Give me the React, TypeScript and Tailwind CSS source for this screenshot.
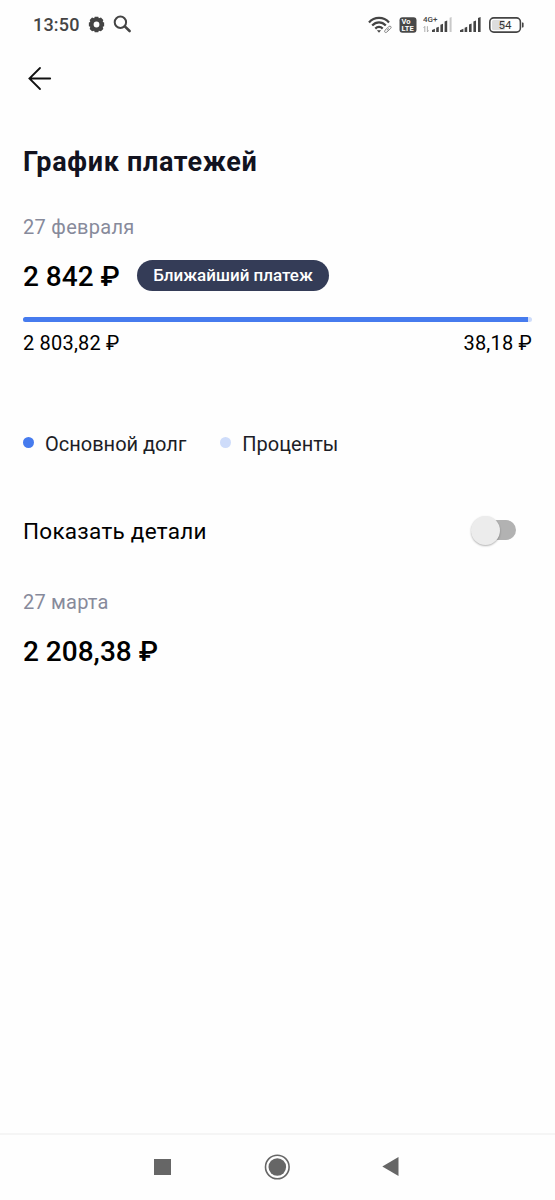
import React from 'react';

const PAYMENT = { principal: '2 803,82 ₽', interest: '38,18 ₽', principalShare: 99.3 };

const LEGEND = [
  { label: 'Основной долг', color: 'bg-[#467bee]' },
  { label: 'Проценты', color: 'bg-[#cedcfa]' },
];

function WifiIcon() {
  return (
    <svg width="25" height="20" viewBox="0 0 25 20" fill="none" stroke="#444" strokeWidth="2.2">
      <path d="M1 7.4C6.3 1.4 15.7 1.4 21 7.4" />
      <path d="M4.2 10.6C8.2 6.4 13.8 6.4 17.8 10.6" />
      <path d="M7.3 13.6C9.5 11.4 12.5 11.4 14.7 13.6" />
      <path d="M8.9 15.3h4.2L11 17.7z" fill="#444" stroke="none" />
      <path d="M17 15.2l3.8-3.6c1.5-1.3 3.2.4 1.9 1.8l-3.9 3.7c-1.5 1.3-3-.5-1.8-1.9z" stroke="#fefefe" strokeWidth="3" />
      <path d="M17 15.2l3.8-3.6c1.5-1.3 3.2.4 1.9 1.8l-3.9 3.7c-1.5 1.3-3-.5-1.8-1.9zM18.9 15.3l2.2-2" stroke="#777" strokeWidth="0.9" />
    </svg>
  );
}

function VolteIcon() {
  return (
    <svg width="18" height="16" viewBox="0 0 18 16">
      <rect x="0.5" y="0.2" width="17" height="15.6" rx="3" fill="#484848" />
      <text x="2.6" y="7.4" fill="#fff" className="font-bold text-[7.5px]">Vo</text>
      <text x="2.6" y="14.4" fill="#fff" className="font-bold text-[7.5px]">LTE</text>
    </svg>
  );
}

function MobileDataIcon() {
  return (
    <svg width="30" height="20" viewBox="0 0 30 20" fill="#444">
      <text x="0" y="7.2" className="text-[8px] font-medium">4G+</text>
      <path d="M1.8 17V11.4M.6 12.8l1.2-1.4M4.4 11.2v5.6M5.6 15.4l-1.2 1.5" fill="none" stroke="#999" strokeWidth="0.8" />
      <path d="M9 15l2.9-1.2V17H9zM13.2 12.8l2.6-1V17h-2.6zM17.4 9.8l2.6-1V17h-2.6zM21.6 6.6l2.6-1V17h-2.6z" />
      <path d="M26.6 2.8l2-.8V17h-2z" fill="#c8c8c8" />
    </svg>
  );
}

function SignalIcon() {
  return (
    <svg width="21" height="20" viewBox="0 0 21 20" fill="#444">
      <path d="M0 15.2l3.4-1.4V17H0zM4.6 12.8l2.6-1V17H4.6zM9 9.6l2.6-1V17H9zM13.4 6.4l2.6-1V17h-2.6zM18 3l2.6-1V17H18z" />
    </svg>
  );
}

function BatteryIcon() {
  return (
    <svg width="36" height="16" viewBox="0 0 36 16">
      <rect x="3" y="3" width="13" height="10" rx="1.5" fill="#ddd" />
      <rect x="0.8" y="0.9" width="30.6" height="14.2" rx="4" fill="none" stroke="#444" strokeWidth="1.6" />
      <path d="M33 5.5h.6q1 0 1 1v3q0 1-1 1H33z" fill="#444" />
      <text x="16" y="12" textAnchor="middle" fill="#333" className="text-[11.5px]">54</text>
    </svg>
  );
}

function StatusBar() {
  return (
    <header className="flex h-12 items-center justify-between pr-[30px] pl-[33px] text-[#444]">
      <div className="flex items-center">
        <span className="w-[55px] pt-px text-[18px] font-medium tracking-[0.2px]">13:50</span>
        <svg width="17" height="17" viewBox="0 0 24 24" fill="#444" fillRule="evenodd">
          <path d="M9.5 1h5l.8 2 3-.8 3.3 3.3-.8 3 2 .8v5.2l-2 .8.8 3-3.3 3.3-3-.8-.8 2h-5l-.8-2-3 .8-3.3-3.3.8-3-2-.8V9.3l2-.8-.8-3 3.3-3.3 3 .8zM12 7.9a4.1 4.1 0 1 0 0 8.2 4.1 4.1 0 1 0 0-8.2z" />
        </svg>
        <svg className="ml-2" width="19" height="18" viewBox="0 0 19 18" fill="none" stroke="#444">
          <circle cx="7.4" cy="7.2" r="5.7" strokeWidth="2" />
          <path d="M11.8 11.4l4.8 4.6" strokeWidth="2.6" strokeLinecap="round" />
        </svg>
      </div>
      <div className="flex items-center">
        <div className="mt-px"><WifiIcon /></div>
        <div className="ml-[6px] mt-px"><VolteIcon /></div>
        <div className="ml-[6px] mt-px"><MobileDataIcon /></div>
        <div className="ml-[7px] mt-px"><SignalIcon /></div>
        <div className="ml-2 mt-px"><BatteryIcon /></div>
      </div>
    </header>
  );
}

function SystemNav() {
  return (
    <footer className="flex h-[67px] items-center justify-between border-t-2 border-[#f5f5f5] pr-[156px] pb-[2px] pl-[154px]">
      <div className="h-4 w-[17px] bg-[#666]" />
      <svg width="26" height="26" viewBox="0 0 26 26" fill="#666">
        <circle cx="13.3" cy="13" r="11.8" fill="none" stroke="#666" strokeWidth="1.6" />
        <circle cx="13.3" cy="13" r="8.8" />
      </svg>
      <svg width="17" height="19" viewBox="0 0 17 19" fill="#666">
        <path d="M16.5 0v19L.3 9.5z" />
      </svg>
    </footer>
  );
}

export default function App() {
  const [details, setDetails] = React.useState(false);

  return (
    <div className="flex h-[1200px] w-[555px] flex-col bg-[#fefefe] font-[Roboto,sans-serif] text-black">
      <StatusBar />
      <main className="flex-1 pr-[23px] pl-[23px]">
        <button className="mt-[18px] ml-[5px] block" aria-label="Назад">
          <svg width="24" height="25" viewBox="0 0 24 25" fill="none" stroke="#111" strokeWidth="1.8" strokeLinecap="round">
            <path d="M12 2L1.4 12.5 12 23M1.4 12.5H22.2" />
          </svg>
        </button>

        <h1 className="mt-[53px] text-[27px] leading-9 font-bold tracking-[0.68px] whitespace-nowrap text-[#12131f]">График платежей</h1>

        <section>
          <p className="mt-[35px] text-[20px] leading-6 tracking-[0.3px] text-[#878a9b]">27 февраля</p>
          <div className="mt-5 flex h-9 items-center">
            <span className="w-[114px] text-[28px] leading-9 font-medium whitespace-nowrap">2 842 ₽</span>
            <span className="-mt-[4px] flex h-[31px] w-[192px] items-center justify-center rounded-full bg-[#343c57] pt-px text-[17px] font-medium whitespace-nowrap text-white">
              Ближайший платеж
            </span>
          </div>
          <div className="mt-[22px] flex h-[5px] overflow-hidden rounded-full bg-[#cedcfa]">
            <div className="bg-[#467bee]" style={{ width: `${PAYMENT.principalShare}%` }} />
          </div>
          <div className="mt-[9px] flex justify-between text-[20px] leading-[25px] tracking-[0.2px]">
            <span>{PAYMENT.principal}</span>
            <span>{PAYMENT.interest}</span>
          </div>
        </section>

        <div className="mt-[74px] flex gap-[34px]">
          {LEGEND.map((item) => (
            <div key={item.label} className="flex items-center gap-[11px] text-[20px] leading-7 whitespace-nowrap text-[#1c1d26]">
              <span className={`-mt-[3px] size-[11px] rounded-full ${item.color}`} />
              {item.label}
            </div>
          ))}
        </div>

        <div className="mt-[57px] flex h-8 items-center justify-between pr-4">
          <span className="text-[22.5px] leading-8 tracking-[0.27px]">Показать детали</span>
          <button
            role="switch"
            aria-checked={details}
            aria-label="Показать детали"
            onClick={() => setDetails(!details)}
            className="-mt-[2px] flex h-5 w-[41px] items-center rounded-full bg-[#b2b2b2]"
          >
            <span
              className={`size-[29px] shrink-0 rounded-full bg-[#ececec] shadow-[0_1px_2px_rgba(0,0,0,0.3)] ${
                details ? 'ml-[17px]' : '-ml-[4px]'
              }`}
            />
          </button>
        </div>

        <section>
          <p className="mt-[43px] text-[20px] leading-6 tracking-[0.2px] text-[#878a9b]">27 марта</p>
          <p className="mt-5 text-[28px] leading-9 font-medium">2 208,38 ₽</p>
        </section>
      </main>
      <SystemNav />
    </div>
  );
}
